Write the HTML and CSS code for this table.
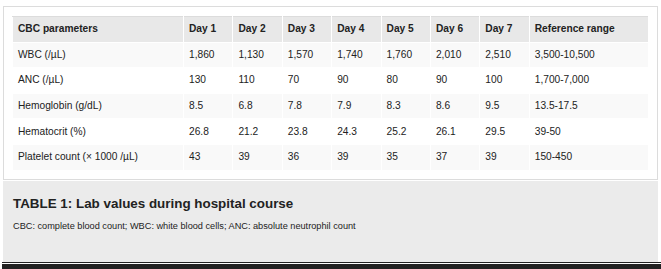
FILE: index.html
```html
<!DOCTYPE html>
<html>
<head>
<meta charset="utf-8">
<link rel="stylesheet" href="styles.css">
</head>
<body>
<div class="page">
  <div class="frame">
    <table class="lab">
      <colgroup>
        <col class="c-param"><col class="c-day"><col class="c-day"><col class="c-day"><col class="c-day"><col class="c-day"><col class="c-day"><col class="c-day"><col>
      </colgroup>
      <thead>
        <tr><th>CBC parameters</th><th>Day 1</th><th>Day 2</th><th>Day 3</th><th>Day 4</th><th>Day 5</th><th>Day 6</th><th>Day 7</th><th>Reference range</th></tr>
      </thead>
      <tbody>
        <tr><td>WBC (/µL)</td><td>1,860</td><td>1,130</td><td>1,570</td><td>1,740</td><td>1,760</td><td>2,010</td><td>2,510</td><td>3,500-10,500</td></tr>
        <tr><td>ANC (/µL)</td><td>130</td><td>110</td><td>70</td><td>90</td><td>80</td><td>90</td><td>100</td><td>1,700-7,000</td></tr>
        <tr><td>Hemoglobin (g/dL)</td><td>8.5</td><td>6.8</td><td>7.8</td><td>7.9</td><td>8.3</td><td>8.6</td><td>9.5</td><td>13.5-17.5</td></tr>
        <tr><td>Hematocrit (%)</td><td>26.8</td><td>21.2</td><td>23.8</td><td>24.3</td><td>25.2</td><td>26.1</td><td>29.5</td><td>39-50</td></tr>
        <tr><td>Platelet count (× 1000 /µL)</td><td>43</td><td>39</td><td>36</td><td>39</td><td>35</td><td>37</td><td>39</td><td>150-450</td></tr>
      </tbody>
    </table>
  </div>
  <div class="caption">
    <div class="title">TABLE 1: Lab values during hospital course</div>
    <div class="note">CBC: complete blood count; WBC: white blood cells; ANC: absolute neutrophil count</div>
  </div>
  <div class="rule"></div>
</div>
</body>
</html>
```
FILE: styles.css
```css
html, body {
  margin: 0;
  padding: 0;
  background: #fff;
}
body {
  font-family: "Liberation Sans", Arial, sans-serif;
  color: #222;
}
.page {
  padding: 6px 0 0 3px;
  width: 658px;
}
.frame {
  width: 655px;
  box-sizing: border-box;
  border: 1px solid #dcdcdc;
  padding: 9px 8px 8px 8px;
}
.lab {
  width: 100%;
  border-collapse: collapse;
  border: 1px solid #dcdcdc;
  font-size: 10.2px;
  table-layout: fixed;
}
.c-param { width: 171px; }
.c-day { width: 49.4px; }
.lab th, .lab td {
  border: 1px solid #fff;
  text-align: left;
  padding: 0 5px;
  height: 25.6px;
  box-sizing: border-box;
  line-height: 12px;
  white-space: nowrap;
}
.lab th {
  background: #e8e8e8;
  font-weight: bold;
}
.lab tbody tr:nth-child(odd) td {
  background: #f9f9f9;
}
.lab tbody tr:nth-child(even) td {
  background: #fff;
}
.lab tr:first-child th { border-top-color: #dcdcdc; }
.caption {
  margin-top: 1px;
  width: 655px;
  height: 81px;
  box-sizing: border-box;
  background: #ebebeb;
  padding: 15.6px 10px 0 10px;
}
.title {
  font-weight: bold;
  font-size: 13.4px;
  line-height: 16px;
  color: #222;
}
.note {
  margin-top: 8px;
  font-size: 9.2px;
  line-height: 12px;
  color: #222;
}
.rule {
  margin-left: -1px;
  width: 662px;
  height: 1px;
  background: #fff;
  border-top: 1px solid #222;
  border-bottom: 5px solid #222;
}
```
